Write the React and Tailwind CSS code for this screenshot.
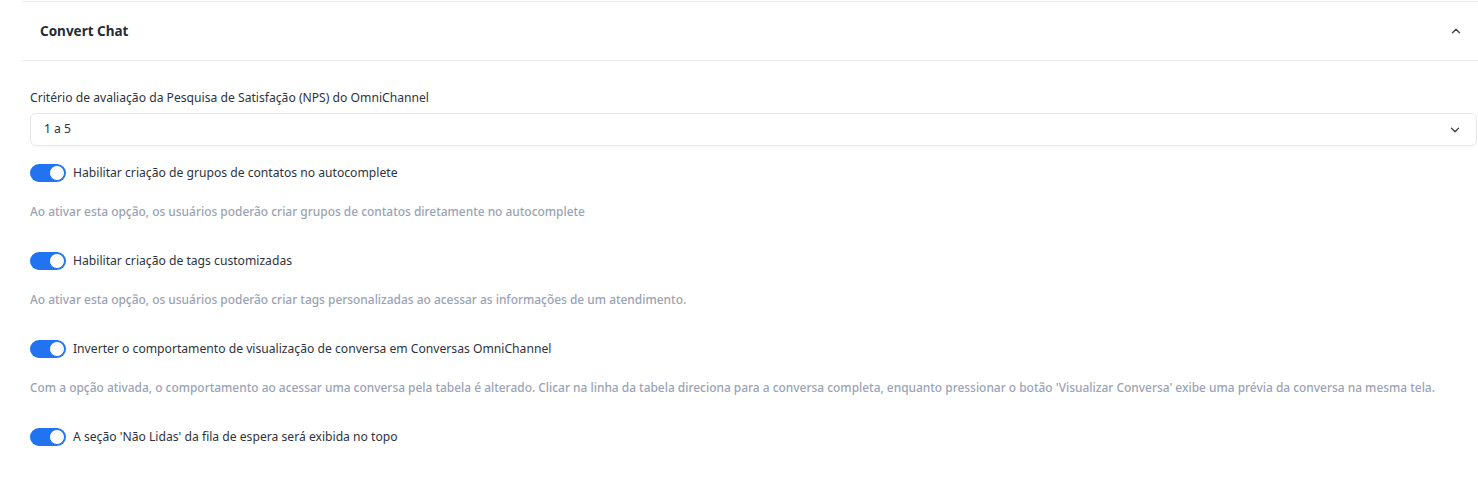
import { ChevronUp, ChevronDown } from 'lucide-react';

const options = [
  {
    label: 'Habilitar criação de grupos de contatos no autocomplete',
    hint: 'Ao ativar esta opção, os usuários poderão criar grupos de contatos diretamente no autocomplete',
  },
  {
    label: 'Habilitar criação de tags customizadas',
    hint: 'Ao ativar esta opção, os usuários poderão criar tags personalizadas ao acessar as informações de um atendimento.',
  },
  {
    label: 'Inverter o comportamento de visualização de conversa em Conversas OmniChannel',
    hint: "Com a opção ativada, o comportamento ao acessar uma conversa pela tabela é alterado. Clicar na linha da tabela direciona para a conversa completa, enquanto pressionar o botão 'Visualizar Conversa' exibe uma prévia da conversa na mesma tela.",
  },
  {
    label: "A seção 'Não Lidas' da fila de espera será exibida no topo",
  },
];

function Toggle() {
  return (
    <div className="flex h-[18px] w-[36px] shrink-0 items-center justify-end rounded-full bg-[#2173f0] p-[1px]">
      <div className="h-[16px] w-[16px] rounded-full border border-[#2173f0] bg-white" />
    </div>
  );
}

export default function App() {
  return (
    <div className="min-h-[485px] bg-white pl-[22px] text-[12.15px] text-[#2d3340]" style={{ fontFamily: '"Noto Sans", "Open Sans", sans-serif' }}>
      {/* Section header */}
      <div className="mt-[1px] flex h-[60px] items-center justify-between border-y border-[#ececef] pl-[18px] pr-[15px]">
        <span className="text-[13.5px] font-bold text-[#262b35]">Convert Chat</span>
        <ChevronUp className="h-[14px] w-[14px] text-[#3a3f4a]" strokeWidth={2.2} />
      </div>

      <div className="pl-[8px] pr-[1px] pt-[28px]">
        <div className="mb-[6px] leading-[18px]">Critério de avaliação da Pesquisa de Satisfação (NPS) do OmniChannel</div>
        <div className="flex h-[33px] items-center justify-between rounded-[6px] border border-[#e6e8ec] pl-[13px] pr-[14px] shadow-[0_1px_2px_rgba(0,0,0,0.04)]">
          <span>1 a 5</span>
          <ChevronDown className="h-[14px] w-[14px] text-[#3a3f4a]" strokeWidth={2.2} />
        </div>

        <div className="mt-[18px] flex flex-col">
          {options.map((opt) => (
            <div key={opt.label} className="flex flex-col">
              <div className="flex h-[18px] items-center gap-[7px]">
                <Toggle />
                <span>{opt.label}</span>
              </div>
              {opt.hint && (
                <div className="mb-[32px] mt-[20px] whitespace-nowrap text-[11.93px] font-medium leading-[18px] text-[#99a3b4]">{opt.hint}</div>
              )}
            </div>
          ))}
        </div>
      </div>
    </div>
  );
}
